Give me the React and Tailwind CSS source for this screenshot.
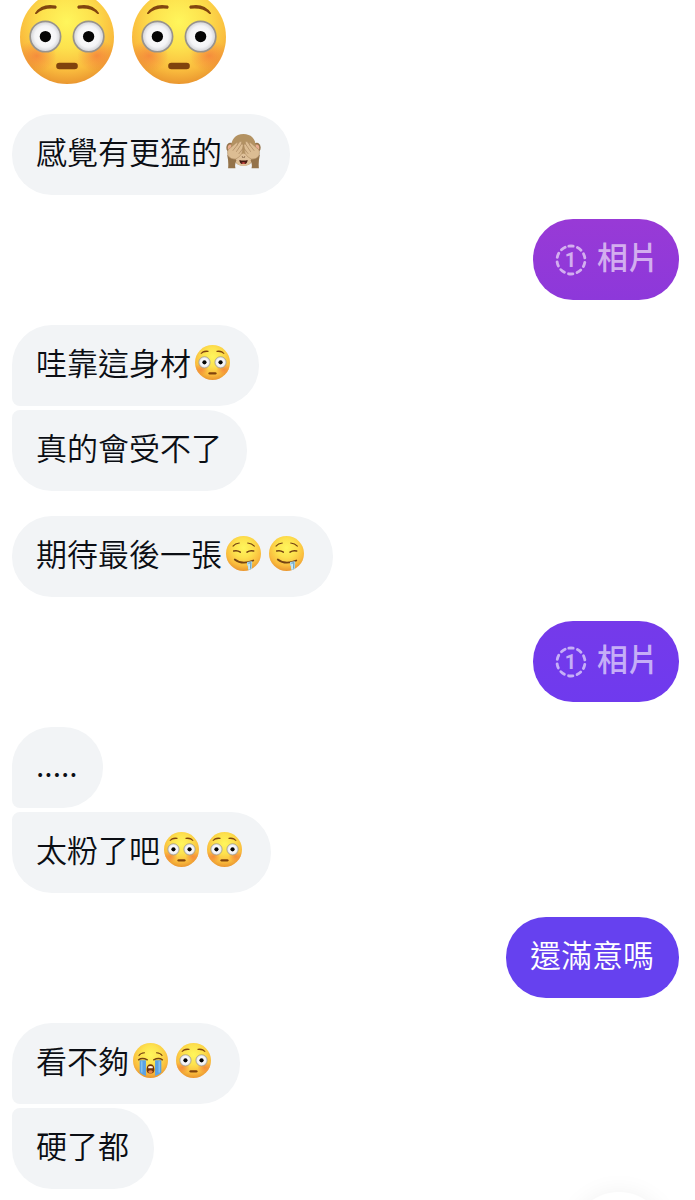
import React, { useId } from 'react';
import clsx from 'clsx';

const Face = ({ children, className }) => {
    const id = useId();
    return (
        <svg viewBox="0 0 100 100" className={className} role="img">
            <defs>
                <radialGradient id={`${id}-skin`} cx="50%" cy="34%" r="68%">
                    <stop offset="0" stopColor="#fff65c" />
                    <stop offset="0.4" stopColor="#fde24e" />
                    <stop offset="0.75" stopColor="#fabd3e" />
                    <stop offset="1" stopColor="#e8922e" />
                </radialGradient>
                <clipPath id={`${id}-head`}>
                    <circle cx="50" cy="50" r="50" />
                </clipPath>
            </defs>
            <circle cx="50" cy="50" r="50" fill={`url(#${id}-skin)`} />
            <g clipPath={`url(#${id}-head)`}>{children}</g>
        </svg>
    );
};

const Flushed = ({ className }) => {
    const id = useId();
    return (
        <Face className={className}>
            <defs>
                <radialGradient id={`${id}-cheek`}>
                    <stop offset="0" stopColor="#f2703a" stopOpacity="0.65" />
                    <stop offset="1" stopColor="#f2703a" stopOpacity="0" />
                </radialGradient>
                <radialGradient id={`${id}-eye`}>
                    <stop offset="0" stopColor="#ffffff" />
                    <stop offset="0.7" stopColor="#f4f4f6" />
                    <stop offset="1" stopColor="#cfd0d4" />
                </radialGradient>
            </defs>
            <ellipse cx="18" cy="70" rx="21" ry="17" fill={`url(#${id}-cheek)`} />
            <ellipse cx="82" cy="70" rx="21" ry="17" fill={`url(#${id}-cheek)`} />
            <path d="M16 24.500Q23 13.500 38 16.500Q40 18 38 20Q25 18.500 17.500 25.500Q15.500 26 16 24.500ZM84 24.500Q77 13.500 62 16.500Q60 18 62 20Q75 18.500 82.500 25.500Q84.500 26 84 24.500Z" fill="#81450f" />
            <circle cx="27" cy="49.5" r="16.2" fill={`url(#${id}-eye)`} stroke="#98938c" strokeWidth="1.8" />
            <circle cx="73" cy="49.5" r="16.2" fill={`url(#${id}-eye)`} stroke="#98938c" strokeWidth="1.8" />
            <circle cx="27" cy="49.5" r="6" fill="#050505" />
            <circle cx="73" cy="49.5" r="6" fill="#050505" />
            <rect x="38.5" y="77.5" width="23" height="6.8" rx="3.4" fill="#80430d" />
        </Face>
    );
};

const Drooling = ({ className }) => (
    <Face className={className}>
        <g fill="none" stroke="#754313" strokeLinecap="round">
            <path d="M20 29Q26 21 38 20M62 20Q74 21 81 29" strokeWidth="3.2" />
            <path d="M22 43Q32 40 41 46M60 46Q69 40 79 43" strokeWidth="4.4" />
            <path d="M25 67Q46 84 78 70" strokeWidth="5" />
        </g>
        <path d="M60 75Q68 72 75 72L74 91Q74 99 68 99Q62 99 63 91Q64 86 60 83Z" fill="#a9d8ef" />
        <path d="M64 78L71 76L70 93" fill="none" stroke="#6296b5" strokeWidth="2.4" />
        <path d="M66 81V93" stroke="#ffffff" strokeWidth="2" strokeLinecap="round" />
    </Face>
);

const Crying = ({ className }) => (
    <Face className={className}>
        <path d="M19 49H37V94Q26 90 19 84ZM63 49H81V84Q74 90 63 94Z" fill="#5ba3e4" />
        <path d="M25 52V84M75 52V84" stroke="#85c3f2" strokeWidth="4" />
        <g fill="none" stroke="#754313" strokeLinecap="round">
            <path d="M17 36Q21 29 33 28M67 28Q79 29 83 36" strokeWidth="3" />
            <path d="M16 48Q26 41 41 48M59 48Q74 41 84 48" strokeWidth="4.2" />
        </g>
        <path d="M39 74Q40 61 50 61Q60 61 61 74Q62 87 50 87Q38 87 39 74Z" fill="#713407" />
        <path d="M43 68Q50 63 57 68L56 72H44Z" fill="#fff4e8" />
        <path d="M43 82Q50 74 57 82Q54 87 50 87Q46 87 43 82Z" fill="#e98245" />
    </Face>
);

const SeeNoEvil = ({ className }) => (
    <svg viewBox="0 0 100 100" className={className} role="img">
        <ellipse cx="12" cy="39" rx="11" ry="14" fill="#957349" />
        <ellipse cx="88" cy="39" rx="11" ry="14" fill="#957349" />
        <ellipse cx="12" cy="40" rx="7" ry="10" fill="#e9ad91" />
        <ellipse cx="88" cy="40" rx="7" ry="10" fill="#e9ad91" />
        <path d="M14 48Q12 1 50 0Q88 1 86 48Q85 66 76 77Q68 91 50 91Q32 91 24 77Q15 66 14 48Z" fill="#b39262" />
        <path d="M27 77Q25 60 50 56Q75 60 73 77Q68 91 50 91Q32 91 27 77Z" fill="#dfc19a" />
        <path d="M38 74Q50 78 62 74Q61 86 50 86Q39 86 38 74Z" fill="#44180f" />
        <path d="M44 82Q50 79 56 82Q53 86 50 86Q47 86 44 82Z" fill="#d9504a" />
        <path d="M47 65L48 67M53 65L52 67" stroke="#5c3d24" strokeWidth="2.4" strokeLinecap="round" />
        <path d="M3 58Q8 67 22 69L30 74Q24 84 27 98H6Q8 80 3 58ZM97 58Q92 67 78 69L70 74Q76 84 73 98H94Q92 80 97 58Z" fill="#94734a" />
        <g fill="#dcbd93" stroke="#a98760" strokeWidth="1.6">
            <path d="M5 58Q2 45 13 39L27 27Q32 22 34 27L31 33L38 23Q43 18 45 25L44 29Q49 26 49 33L47 43Q49 56 38 65Q28 76 15 70Q7 67 5 58Z" />
            <path d="M95 58Q98 45 87 39L73 27Q68 22 66 27L69 33L62 23Q57 18 55 25L56 29Q51 26 51 33L53 43Q51 56 62 65Q72 76 85 70Q93 67 95 58Z" />
        </g>
        <path d="M31 33L20 47M44 29L30 50M47 43L37 56M69 33L80 47M56 29L70 50M53 43L63 56" fill="none" stroke="#a98760" strokeWidth="2" strokeLinecap="round" />
    </svg>
);

const ViewOnceIcon = () => (
    <svg viewBox="0 0 32 32" className="size-8 shrink-0 font-[Roboto,sans-serif]" aria-hidden="true">
        <circle cx="16" cy="16" r="14" fill="none" stroke="currentColor" strokeWidth="2.8" strokeLinecap="round" strokeDasharray="4.4 4.396" transform="rotate(-99 16 16)" />
        <text x="15.5" y="23" textAnchor="middle" fontSize="20" fontWeight="700" fill="currentColor">1</text>
    </svg>
);

const emojis = {
    flushed: Flushed,
    drooling: Drooling,
    crying: Crying,
    monkey: SeeNoEvil,
};

const groups = [
    { from: 'them', messages: [{ text: '感覺有更猛的', emoji: ['monkey'] }] },
    { from: 'me', messages: [{ photo: true, color: 'bg-linear-to-b from-[#983ad6] to-[#8d38da]' }] },
    {
        from: 'them',
        messages: [
            { text: '哇靠這身材', emoji: ['flushed'] },
            { text: '真的會受不了' },
        ],
    },
    { from: 'them', messages: [{ text: '期待最後一張', emoji: ['drooling', 'drooling'] }] },
    { from: 'me', messages: [{ photo: true, color: 'bg-linear-to-b from-[#753aea] to-[#6f3aee]' }] },
    {
        from: 'them',
        messages: [
            { text: '.....' },
            { text: '太粉了吧', emoji: ['flushed', 'flushed'] },
        ],
    },
    { from: 'me', messages: [{ text: '還滿意嗎', color: 'bg-[#6641ef]' }] },
    {
        from: 'them',
        messages: [
            { text: '看不夠', emoji: ['crying', 'flushed'] },
            { text: '硬了都' },
        ],
    },
];

const Bubble = ({ message, mine, first, last }) => {
    if (message.photo) {
        return (
            <button type="button" className={clsx('flex items-center gap-[10px] rounded-[40px] pt-[15px] pr-5 pb-[14px] pl-[22px] text-white/60', message.color)}>
                <ViewOnceIcon />
                <span className="pb-2 text-[31px] leading-[44px] font-medium">相片</span>
            </button>
        );
    }

    return (
        <div
            className={clsx(
                'flex items-center rounded-[40px] pt-[15px] pr-[25px] pb-[22px] pl-6',
                mine ? ['text-white', message.color] : 'bg-[#f2f4f6] text-[#0b0e14]',
                !first && 'rounded-tl-lg',
                !last && 'rounded-bl-lg',
            )}
        >
            <p className="text-[31px] leading-[44px]">{message.text}</p>
            {message.emoji?.map((name, i) => {
                const Emoji = emojis[name];
                return (
                    <span key={i} className="flex w-[43px] justify-center">
                        <Emoji className="size-[35px]" />
                    </span>
                );
            })}
        </div>
    );
};

const App = () => {
    return (
        <main className="overflow-hidden bg-white pr-4 pb-3 pl-3 font-['Noto_Sans_CJK_TC',sans-serif] font-[350]">
            {/* Big emoji message, scrolled half out of view */}
            <div className="-mt-[10px] mb-[30px] flex gap-[18px] pl-2">
                <Flushed className="size-[94px]" />
                <Flushed className="size-[94px]" />
            </div>

            {groups.map((group, i) => {
                const mine = group.from === 'me';
                return (
                    <section
                        key={i}
                        className={clsx('flex flex-col gap-1', mine ? 'mt-6 items-end' : 'items-start', !mine && i > 0 && 'mt-[25px]')}
                    >
                        {group.messages.map((message, j) => (
                            <Bubble
                                key={j}
                                message={message}
                                mine={mine}
                                first={j === 0}
                                last={j === group.messages.length - 1}
                            />
                        ))}
                    </section>
                );
            })}

            {/* Scroll to latest */}
            <button
                type="button"
                aria-label="捲動至最新訊息"
                className="fixed right-7 -bottom-[88px] size-24 rounded-full bg-white shadow-[0_0_24px_rgba(0,0,0,0.06)]"
            />
        </main>
    );
};

export default App;
